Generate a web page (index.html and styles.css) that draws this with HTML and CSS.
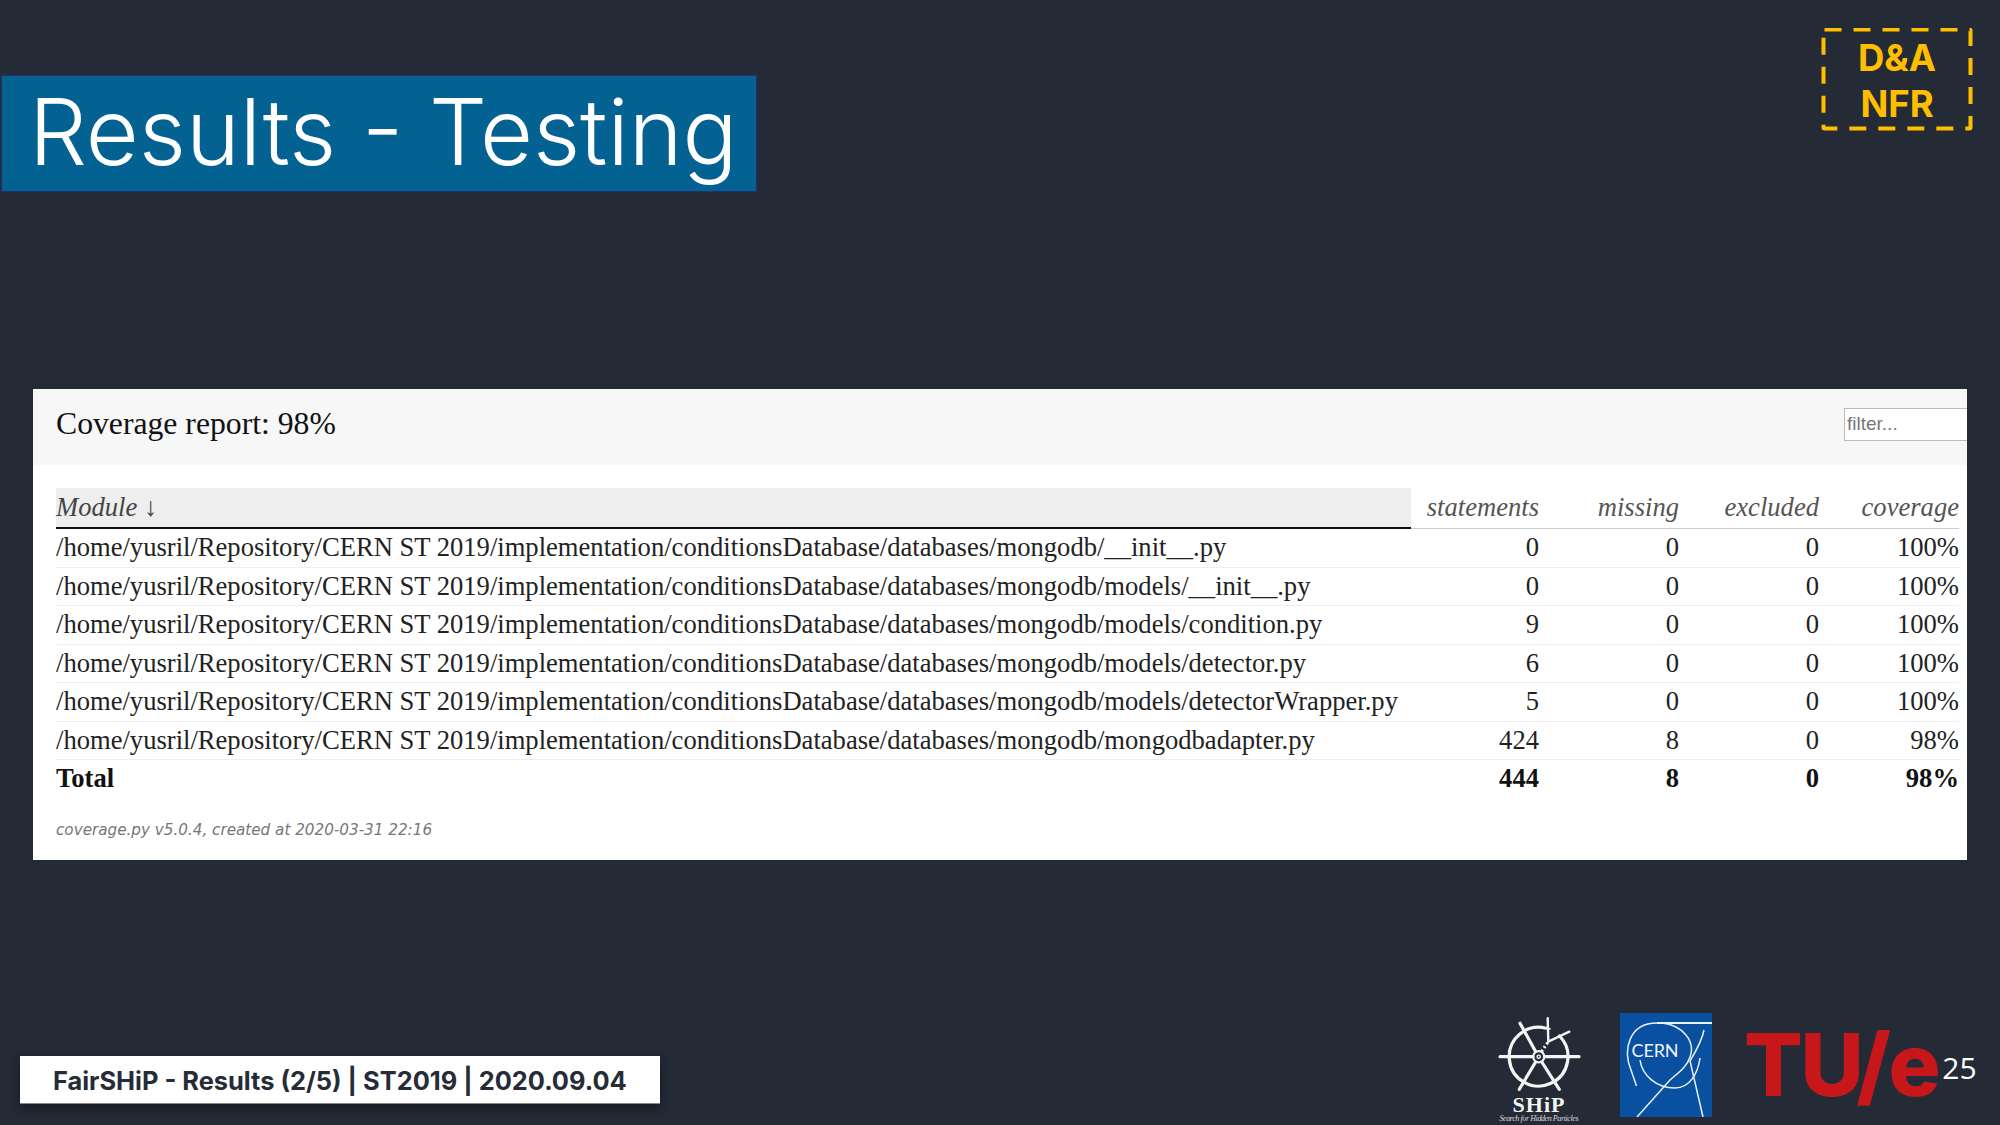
FILE: index.html
```html
<!DOCTYPE html>
<html lang="en">
<head>
    <meta charset="UTF-8">
    <title>Results - Testing</title>
    <link rel="stylesheet" href="styles.css">
</head>
<body>
<div class="slide">

    <!-- Tag top right -->
    <div class="tag">
        <svg class="tag-border" width="152" height="106" viewBox="0 0 152 106">
            <rect x="2.5" y="1.5" width="147" height="99" rx="1" fill="none" stroke="#ffbe00" stroke-width="4" stroke-dasharray="17 12"/>
        </svg>
        <span>D&amp;A</span>
        <span>NFR</span>
    </div>

    <h1 class="title">Results - Testing</h1>

    <!-- Coverage report -->
    <div class="report">
        <div class="report-header">
            <h2>Coverage report: 98%</h2>
            <input class="filter" type="text" placeholder="filter...">
        </div>
        <table class="index">
            <thead>
                <tr>
                    <th class="module">Module ↓</th>
                    <th class="num col-st">statements</th>
                    <th class="num col-mi">missing</th>
                    <th class="num col-ex">excluded</th>
                    <th class="num col-co">coverage</th>
                </tr>
            </thead>
            <tbody>
                <tr>
                    <td>/home/yusril/Repository/CERN ST 2019/implementation/conditionsDatabase/databases/mongodb/__init__.py</td>
                    <td class="num">0</td><td class="num">0</td><td class="num">0</td><td class="num">100%</td>
                </tr>
                <tr>
                    <td>/home/yusril/Repository/CERN ST 2019/implementation/conditionsDatabase/databases/mongodb/models/__init__.py</td>
                    <td class="num">0</td><td class="num">0</td><td class="num">0</td><td class="num">100%</td>
                </tr>
                <tr>
                    <td>/home/yusril/Repository/CERN ST 2019/implementation/conditionsDatabase/databases/mongodb/models/condition.py</td>
                    <td class="num">9</td><td class="num">0</td><td class="num">0</td><td class="num">100%</td>
                </tr>
                <tr>
                    <td>/home/yusril/Repository/CERN ST 2019/implementation/conditionsDatabase/databases/mongodb/models/detector.py</td>
                    <td class="num">6</td><td class="num">0</td><td class="num">0</td><td class="num">100%</td>
                </tr>
                <tr>
                    <td>/home/yusril/Repository/CERN ST 2019/implementation/conditionsDatabase/databases/mongodb/models/detectorWrapper.py</td>
                    <td class="num">5</td><td class="num">0</td><td class="num">0</td><td class="num">100%</td>
                </tr>
                <tr>
                    <td>/home/yusril/Repository/CERN ST 2019/implementation/conditionsDatabase/databases/mongodb/mongodbadapter.py</td>
                    <td class="num">424</td><td class="num">8</td><td class="num">0</td><td class="num">98%</td>
                </tr>
            </tbody>
            <tfoot>
                <tr>
                    <td>Total</td>
                    <td class="num">444</td><td class="num">8</td><td class="num">0</td><td class="num">98%</td>
                </tr>
            </tfoot>
        </table>
        <p class="created">coverage.py v5.0.4, created at 2020-03-31 22:16</p>
    </div>

    <!-- Footer with logos -->
    <div class="footer">
        <div class="footer-label">FairSHiP - Results (2/5) | ST2019 | 2020.09.04</div>

        <svg class="logo-ship" width="84" height="112" viewBox="0 0 84 112">
            <g fill="none" stroke="#f4f4f4" stroke-width="3.2" stroke-linecap="round">
                <path d="M61.5 23 A29.4 29.4 0 1 1 48 15.2"/>
                <path d="M2 43.7 H35 M46.5 43.7 H81"/>
                <path d="M22 10.3 L37.6 38.5 M43.8 49 L61.3 76.3"/>
                <path d="M21.3 76.3 L37.6 49"/>
                <circle cx="40.7" cy="43.7" r="5.6" stroke-width="2.2"/>
                <circle cx="40.7" cy="43.7" r="1.6" stroke-width="1.4"/>
                <path d="M43.5 38.5 L50.3 28.7" stroke-dasharray="2 2.4" stroke-linecap="butt"/>
                <path d="M49.7 5.3 L50.3 28.7 L71.3 18.7" stroke-width="2.4"/>
                <path d="M49.8 15.3 L52 16" stroke-width="1.6"/>
            </g>
            <text class="ship-name" x="41" y="99" text-anchor="middle">SHiP</text>
            <text class="ship-sub" x="41" y="108" text-anchor="middle" textLength="79">Search for Hidden Particles</text>
        </svg>

        <svg class="logo-cern" width="92" height="104" viewBox="0 0 92 104">
            <rect width="92" height="104" fill="#0a50a0"/>
            <g fill="none" stroke="#e8f0f8" stroke-width="1.5">
                <path d="M37 10 H92" stroke-width="1.8"/>
                <path d="M16.5 73 L11 57 C3 38 8 10 37 10"/>
                <path d="M42 10 C62 12 76 28 70 44 C67 54 58 60 50 67 L17 104"/>
                <path d="M84 17 C82 28 76 38 70 48 L83 104"/>
                <path d="M20 47 C22 62 36 75 55 75 C70 75 78 60 80 45"/>
            </g>
            <text class="cern-name" x="11.5" y="44" textLength="47">CERN</text>
        </svg>

        <div class="logo-tue">TU/e</div>
        <div class="page-number">25</div>
    </div>
</div>
</body>
</html>
```

FILE: styles.css
```css
body {
    margin: 0;
    background-color: #242b36;
    overflow: hidden;
}
.slide {
    position: relative;
    width: 2000px;
    height: 1125px;
    overflow: hidden;
    padding-top: 75px;
    box-sizing: border-box;
}

/* Title */
.title {
    box-sizing: border-box;
    width: 756px;
    height: 117px;
    margin: 0 0 0 1px;
    padding-left: 27px;
    background: #036292;
    border: 1px solid #20306c;
    color: #fff;
    font-family: Inter, sans-serif;
    font-size: 91.4px;
    font-weight: 300;
    line-height: 111px;
    white-space: nowrap;
}

/* Tag */
.tag {
    position: absolute;
    top: 28px;
    left: 1821px;
    width: 152px;
    height: 104px;
    display: flex;
    flex-direction: column;
    align-items: center;
    padding-top: 7px;
    box-sizing: border-box;
    color: #ffbe00;
    font-family: Inter, sans-serif;
    font-size: 36.5px;
    font-weight: 700;
    line-height: 46px;
}
.tag-border {
    position: absolute;
    top: 0;
    left: 0;
}

/* Report */
.report {
    width: 1934px;
    height: 471px;
    margin: 197px 0 0 33px;
    background: #fff;
    font-family: "Liberation Serif", serif;
    color: #222;
}
.report-header {
    box-sizing: border-box;
    height: 76px;
    padding: 0 0 6px 23px;
    display: flex;
    justify-content: space-between;
    align-items: center;
    background: #f7f7f7;
    overflow: hidden;
}
.report-header h2 {
    margin: 0;
    font-size: 31.7px;
    font-weight: 400;
    color: #111;
}
.filter {
    box-sizing: border-box;
    width: 140px;
    height: 33px;
    margin: 0 -17px 0 0;
    padding: 0 2px;
    border: 1px solid #bbb;
    background: #fff;
    font-family: "Liberation Sans", sans-serif;
    font-size: 19px;
}
.filter::placeholder {
    color: #777;
}
.index {
    width: 1903px;
    margin: 23px 0 0 23px;
    border-collapse: collapse;
    table-layout: fixed;
    font-size: 26.6px;
}
.index th {
    height: 39px;
    padding: 0;
    font-weight: 400;
    font-style: italic;
    text-align: left;
    color: #555;
    border-bottom: 1px solid #ccc;
}
.index th.module {
    width: 1355px;
    background: #eee;
    color: #444;
    border-bottom: 2px solid #111;
}
.index th.col-st { width: 128px; }
.index th.col-mi { width: 140px; }
.index th.col-ex { width: 140px; }
.index th.col-co { width: 140px; }
.index .num {
    text-align: right;
}
.index td {
    height: 37.5px;
    padding: 0;
    white-space: nowrap;
    border-bottom: 1px solid #eee;
}
.index tfoot td {
    font-weight: 700;
    color: #111;
    border-bottom: none;
}
.created {
    margin: 23px 0 0 23px;
    font-family: "DejaVu Sans", sans-serif;
    font-size: 15.2px;
    font-style: italic;
    color: #777;
}

/* Footer */
.footer {
    display: flex;
    align-items: flex-start;
    height: 112px;
    margin-top: 153px;
}
.footer-label {
    box-sizing: border-box;
    width: 640px;
    height: 48px;
    margin: 43px 0 0 20px;
    padding-left: 33px;
    background: #fff;
    border-bottom: 1px solid #888;
    box-shadow: 0 4px 10px rgba(0, 0, 0, 0.45);
    color: #252c38;
    font-family: Inter, sans-serif;
    font-size: 25.4px;
    font-weight: 700;
    line-height: 49px;
    white-space: nowrap;
}
.logo-ship {
    margin-left: 838px;
}
.ship-name {
    fill: #f4f4f4;
    font-family: "Liberation Serif", serif;
    font-size: 22px;
    font-weight: 700;
    letter-spacing: 1px;
}
.ship-sub {
    fill: #ddd;
    font-family: "Liberation Serif", serif;
    font-size: 8px;
    font-style: italic;
}
.logo-cern {
    margin-left: 38px;
}
.cern-name {
    fill: #f0f4fa;
    font-family: Lato, sans-serif;
    font-size: 18px;
}
.logo-tue {
    margin: 2px 0 0 32px;
    color: #c8171a;
    font-family: Inter, sans-serif;
    font-size: 87px;
    font-weight: 800;
    line-height: 100px;
    letter-spacing: -2.5px;
}
.page-number {
    margin: 37px 0 0 4px;
    color: #fff;
    font-family: "Open Sans", sans-serif;
    font-size: 30px;
    line-height: 36px;
}
```
